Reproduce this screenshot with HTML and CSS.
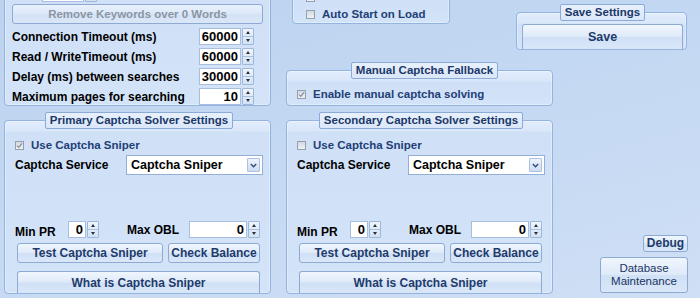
FILE: index.html
```html
<!DOCTYPE html>
<html>
<head>
<meta charset="utf-8">
<link rel="stylesheet" href="styles.css">
</head>
<body>
<div class="screen">
  <div class="top">
    <div class="panel kw-panel">
      <div class="kw-row">
        <span class="spin spin-kw"><span class="val"></span><span class="arr"><i class="up"></i><i class="dn"></i></span></span>
      </div>
      <button class="btn btn-remove" disabled>Remove Keywords over 0 Words</button>
      <div class="frow first"><span class="lbl">Connection Timeout (ms)</span><span class="spin spin-lg"><span class="val">60000</span><span class="arr"><i class="up"></i><i class="dn"></i></span></span></div>
      <div class="frow"><span class="lbl">Read / WriteTimeout (ms)</span><span class="spin spin-lg"><span class="val">60000</span><span class="arr"><i class="up"></i><i class="dn"></i></span></span></div>
      <div class="frow"><span class="lbl">Delay (ms) between searches</span><span class="spin spin-lg"><span class="val">30000</span><span class="arr"><i class="up"></i><i class="dn"></i></span></span></div>
      <div class="frow"><span class="lbl">Maximum pages for searching</span><span class="spin spin-lg"><span class="val">10</span><span class="arr"><i class="up"></i><i class="dn"></i></span></span></div>
    </div>
    <div class="mid">
      <div class="mid-top">
        <div class="panel auto-panel">
          <div class="chk"><span class="box"></span></div>
          <div class="chk"><span class="box"></span><span class="ctext">Auto Start on Load</span></div>
        </div>
        <fieldset class="group save-group">
          <legend>Save Settings</legend>
          <button class="btn btn-save">Save</button>
        </fieldset>
      </div>
      <fieldset class="group manual-group">
        <legend>Manual Captcha Fallback</legend>
        <div class="chk"><span class="box checked"><svg viewBox="0 0 7 7" width="7" height="7"><path d="M1 3.6 L2.8 5.4 L6 1.4" fill="none" stroke="#8a8f97" stroke-width="1.3"/></svg></span><span class="ctext">Enable manual captcha solving</span></div>
      </fieldset>
    </div>
  </div>
  <div class="bottom">
    <fieldset class="group solver">
      <legend>Primary Captcha Solver Settings</legend>
      <div class="chk"><span class="box checked"><svg viewBox="0 0 7 7" width="7" height="7"><path d="M1 3.6 L2.8 5.4 L6 1.4" fill="none" stroke="#8a8f97" stroke-width="1.3"/></svg></span><span class="ctext">Use Captcha Sniper</span></div>
      <div class="svc-row"><span class="lbl">Captcha Service</span><span class="sel"><span class="sel-text">Captcha Sniper</span><span class="sel-arr"><svg viewBox="0 0 7 5" width="7" height="5"><path d="M0.8 1 L3.5 3.8 L6.2 1" fill="none" stroke="#2d4a78" stroke-width="1.3"/></svg></span></span></div>
      <div class="pr-row">
        <span class="lbl lbl-pr">Min PR</span>
        <span class="spin spin-pr"><span class="val">0</span><span class="arr"><i class="up"></i><i class="dn"></i></span></span>
        <span class="lbl lbl-obl">Max OBL</span>
        <span class="spin spin-obl"><span class="val">0</span><span class="arr"><i class="up"></i><i class="dn"></i></span></span>
      </div>
      <div class="btn-row">
        <button class="btn btn-test">Test Captcha Sniper</button>
        <button class="btn btn-bal">Check Balance</button>
      </div>
      <button class="btn btn-what">What is Captcha Sniper</button>
    </fieldset>
    <fieldset class="group solver">
      <legend>Secondary Captcha Solver Settings</legend>
      <div class="chk"><span class="box"></span><span class="ctext">Use Captcha Sniper</span></div>
      <div class="svc-row"><span class="lbl">Captcha Service</span><span class="sel"><span class="sel-text">Captcha Sniper</span><span class="sel-arr"><svg viewBox="0 0 7 5" width="7" height="5"><path d="M0.8 1 L3.5 3.8 L6.2 1" fill="none" stroke="#2d4a78" stroke-width="1.3"/></svg></span></span></div>
      <div class="pr-row">
        <span class="lbl lbl-pr">Min PR</span>
        <span class="spin spin-pr"><span class="val">0</span><span class="arr"><i class="up"></i><i class="dn"></i></span></span>
        <span class="lbl lbl-obl">Max OBL</span>
        <span class="spin spin-obl"><span class="val">0</span><span class="arr"><i class="up"></i><i class="dn"></i></span></span>
      </div>
      <div class="btn-row">
        <button class="btn btn-test">Test Captcha Sniper</button>
        <button class="btn btn-bal">Check Balance</button>
      </div>
      <button class="btn btn-what">What is Captcha Sniper</button>
    </fieldset>
    <div class="side">
      <button class="btn btn-debug">Debug</button>
      <button class="btn btn-db">Database<br>Maintenance</button>
    </div>
  </div>
</div>
</body>
</html>
```

FILE: styles.css
```css
* { box-sizing: border-box; }
html, body { margin: 0; padding: 0; }
body {
  width: 700px;
  height: 298px;
  overflow: hidden;
  font-family: "Liberation Sans", Arial, sans-serif;
  font-size: 12px;
  font-weight: bold;
  color: #000;
  background: linear-gradient(165deg, #bcd2ef 0%, #c3d8f2 45%, #cfdff5 100%);
}
.screen { width: 700px; height: 298px; overflow: hidden; }

/* ---------- shared ---------- */
.panel, .group {
  border: 1px solid #93b3e0;
  border-radius: 4px;
  background: linear-gradient(#e2edfc 0px, #d9e7fa 10px, #cfe0f7 11px, #d3e3f8 100%);
  box-shadow: inset 0 0 0 1px rgba(255, 255, 255, 0.35);
}
fieldset.group {
  margin: 0;
  min-width: 0;
}
.group legend {
  margin: 0 auto;
  padding: 0 4px;
  height: 17px;
  line-height: 15px;
  font-size: 11.5px;
  color: #1b3868;
  background: linear-gradient(#e8f0fc, #dae7f9);
  border: 1px solid #8aaad8;
  border-radius: 2px;
}
.lbl { white-space: nowrap; }

.btn {
  display: block;
  margin: 0;
  padding: 0;
  font-family: inherit;
  font-weight: bold;
  font-size: 12px;
  color: #1e3b6c;
  border: 1px solid #8eaad3;
  border-radius: 3px;
  background: linear-gradient(#f0f6fd 0%, #dfeaf9 48%, #d0e0f5 52%, #d9e7f8 100%);
  white-space: nowrap;
}

.chk { display: flex; align-items: center; height: 16px; }
.box {
  width: 9px;
  height: 9px;
  margin-right: 7px;
  border: 1px solid #959fae;
  background: linear-gradient(#d3d9e2, #eef1f5);
  display: flex;
  align-items: center;
  justify-content: center;
  flex: none;
}
.box svg { display: block; }
.ctext { font-size: 11.5px; color: #1f3f76; white-space: nowrap; }

/* spinner */
.spin { display: flex; height: 17px; flex: none; }
.spin .val {
  flex: 1;
  background: #fff;
  border: 1px solid #a7bede;
  text-align: right;
  padding-right: 2px;
  font-size: 13px;
  line-height: 15px;
}
.spin .arr {
  width: 12px;
  margin-left: 1px;
  display: flex;
  flex-direction: column;
  border: 1px solid #9fb7d9;
  border-radius: 1px;
  background: linear-gradient(#eef4fc, #d3e2f5);
}
.spin .arr i {
  flex: 1;
  display: flex;
  align-items: center;
  justify-content: center;
}
.spin .arr i.up { border-bottom: 1px solid #a9bfde; }
.spin .arr i.up::after {
  content: "";
  border-left: 2.5px solid transparent;
  border-right: 2.5px solid transparent;
  border-bottom: 3px solid #2a2f38;
}
.spin .arr i.dn::after {
  content: "";
  border-left: 2.5px solid transparent;
  border-right: 2.5px solid transparent;
  border-top: 3px solid #2a2f38;
}

/* ---------- top area ---------- */
.top {
  display: flex;
  align-items: flex-start;
  height: 106px;
  padding-left: 4px;
}
.kw-panel {
  width: 267px;
  margin-top: -19px;
  padding: 3px 7px 0 7px;
  flex: none;
}
.kw-row { height: 17px; display: flex; }
.spin-kw { width: 55px; margin-left: 30px; }
.btn-remove {
  width: 100%;
  height: 20px;
  margin-top: 2px;
  font-size: 11.5px;
  color: #8b95a4;
  background: linear-gradient(#e9f1fc 0%, #dce8f8 50%, #d3e2f6 51%, #dae7f8 100%);
}
.frow {
  display: flex;
  align-items: center;
  justify-content: space-between;
  height: 17px;
  margin-top: 3px;
  padding-right: 9px;
}
.frow.first { margin-top: 4px; }
.spin-lg { width: 55px; }

.mid { margin-left: 15px; width: 401px; flex: none; }
.mid-top { display: flex; align-items: flex-start; height: 51px; }
.auto-panel {
  width: 158px;
  margin-left: 6px;
  margin-top: -13px;
  padding: 1px 0 1px 13px;
}
.auto-panel .chk + .chk { margin-top: 1px; }
.save-group {
  width: 171px;
  margin-left: 66px !important;
  margin-top: 4px !important;
  padding: 3px 3px 0 5px;
}
.btn-save {
  width: 100%;
  height: 25px;
  border-bottom: none;
  border-radius: 3px 3px 0 0;
  font-size: 12.5px;
}
.manual-group {
  width: 267px;
  margin-top: 11px !important;
  padding: 7px 0 3px 10px;
}

/* ---------- bottom area ---------- */
.bottom {
  display: flex;
  height: 182px;
  margin-top: 6px;
  padding-left: 4px;
}
.solver {
  width: 267px;
  flex: none;
  padding: 8px 7px 0 10px;
}
.solver + .solver { margin-left: 15px !important; }
.svc-row {
  display: flex;
  align-items: center;
  justify-content: space-between;
  height: 20px;
  margin-top: 2px;
}
.sel {
  display: flex;
  width: 137px;
  height: 20px;
  background: #fff;
  border: 1px solid #94afd6;
}
.sel-text { flex: 1; padding-left: 4px; line-height: 18px; font-size: 12.5px; }
.sel-arr {
  width: 13px;
  margin: 2px 2px 2px 0;
  border: 1px solid #aac1e1;
  border-radius: 1px;
  background: linear-gradient(#eef4fc, #cddcf2);
  display: flex;
  align-items: center;
  justify-content: center;
}
.sel-arr svg { display: block; }
.pr-row {
  display: flex;
  align-items: flex-end;
  height: 17px;
  margin-top: 46px;
}
.pr-row .lbl { line-height: 14px; }
.lbl-pr { width: 53px; margin-bottom: -1px; }
.spin-pr { width: 31px; }
.lbl-obl { width: 62px; margin-left: 28px; margin-bottom: 1px; }
.spin-obl { width: 71px; }
.btn-row {
  display: flex;
  gap: 5px;
  margin-top: 5px;
  margin-left: 2px;
}
.btn-test { width: 146px; height: 20px; }
.btn-bal { width: 92px; height: 20px; }
.btn-what {
  width: 243px;
  height: 22px;
  margin: 8px 0 0 2px;
  border-bottom: none;
  border-radius: 3px 3px 0 0;
}

.side {
  flex: 1;
  display: flex;
  flex-direction: column;
  justify-content: flex-end;
  align-items: flex-end;
  gap: 5px;
  padding: 0 12px 1px 0;
}
.btn-debug { width: 45px; height: 17px; line-height: 15px; }
.btn-db {
  width: 88px;
  height: 36px;
  font-weight: normal;
  font-size: 11.5px;
  line-height: 13px;
  color: #1b3563;
}
```
